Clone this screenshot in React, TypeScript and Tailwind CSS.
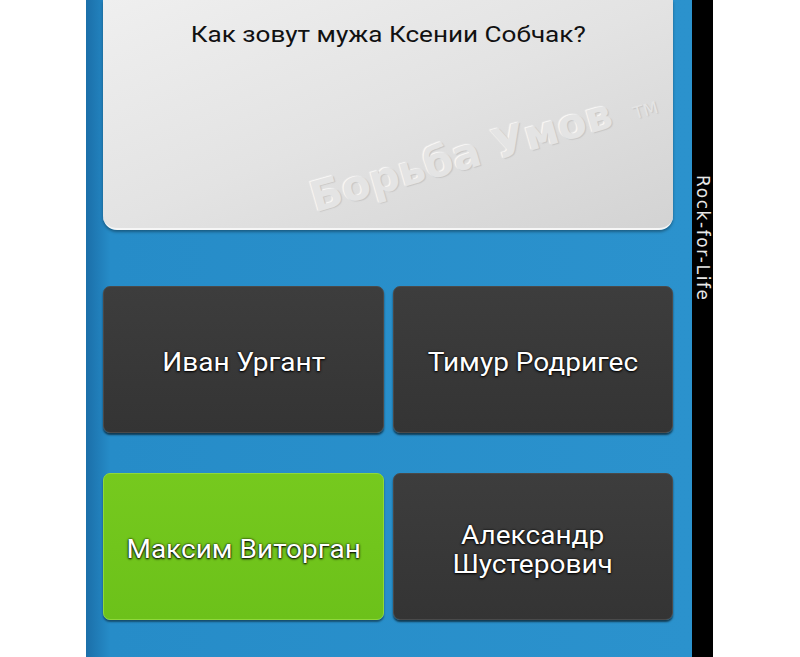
const answers = [
  { text: "Иван Ургант", correct: false },
  { text: "Тимур Родригес", correct: false },
  { text: "Максим Виторган", correct: true },
  { text: "Александр\nШустерович", correct: false },
];

const AnswerButton = ({ text, correct }: { text: string; correct: boolean }) => (
  <div
    className={
      correct
        ? "flex h-[147px] items-center justify-center rounded-[7px] border border-[#8fd83a] bg-gradient-to-b from-[#76c91e] to-[#6cc11a] px-2 pt-[6px] text-center shadow-[0_2px_2px_rgba(0,0,0,0.45)]"
        : "flex h-[147px] items-center justify-center rounded-[7px] border border-[#4a4a4a] bg-gradient-to-b from-[#3d3d3d] to-[#343434] px-2 pt-[6px] text-center shadow-[0_2px_2px_rgba(0,0,0,0.6)]"
    }
  >
    <span className="inline-block scale-x-[1.12] whitespace-pre-line font-['Roboto',sans-serif] text-[25px] leading-[29px] text-white [text-shadow:0_0_2px_#000,0_1px_2px_#000]">
      {text}
    </span>
  </div>
);

export default function App() {
  return (
    <div className="flex h-[657px] w-[800px] overflow-hidden bg-white">
      <div className="w-[86px] shrink-0 bg-white" />
      <div className="flex w-[606px] shrink-0 flex-col bg-gradient-to-r from-[#1b6fa9] from-[0%] via-[#268cc8] via-[4%] to-[#2b92cd] pl-[17px] pr-[19px]">
        <div className="relative h-[230px] overflow-hidden rounded-b-[14px] border-b-2 border-[#f6f6f6] bg-gradient-to-br from-[#efefef] via-[#e3e3e3] to-[#d3d3d3] shadow-[0_2px_3px_rgba(0,0,0,0.35)]">
          <p className="pt-[18px] text-center">
            <span className="inline-block scale-x-[1.16] font-['Roboto',sans-serif] text-[22.5px] text-[#111]">
              Как зовут мужа Ксении Собчак?
            </span>
          </p>
          <div className="absolute left-[202px] top-[124px] -rotate-[16deg] whitespace-nowrap font-['DejaVu_Sans',sans-serif] text-[42px] font-bold text-[#e4e4e4] [text-shadow:1px_1px_1px_#c6c6c6,-1px_-1px_1px_#fafafa]">
            Борьба Умов
          </div>
          <div className="absolute left-[530px] top-[98px] -rotate-[16deg] font-['DejaVu_Sans',sans-serif] text-[17px] text-[#e4e4e4] [text-shadow:1px_1px_1px_#c6c6c6]">
            TM
          </div>
        </div>
        <div className="mt-[56px] grid grid-cols-2 gap-x-[9px] gap-y-[40px]">
          {answers.map((a) => (
            <AnswerButton key={a.text} text={a.text} correct={a.correct} />
          ))}
        </div>
      </div>
      <div className="flex w-[21px] shrink-0 justify-center bg-black pt-[175px]">
        <span className="font-['DejaVu_Sans',sans-serif] text-[17px] tracking-[1.6px] text-[#e8e8e8] [writing-mode:vertical-rl]">
          Rock-for-Life
        </span>
      </div>
      <div className="flex-1 bg-white" />
    </div>
  );
}
